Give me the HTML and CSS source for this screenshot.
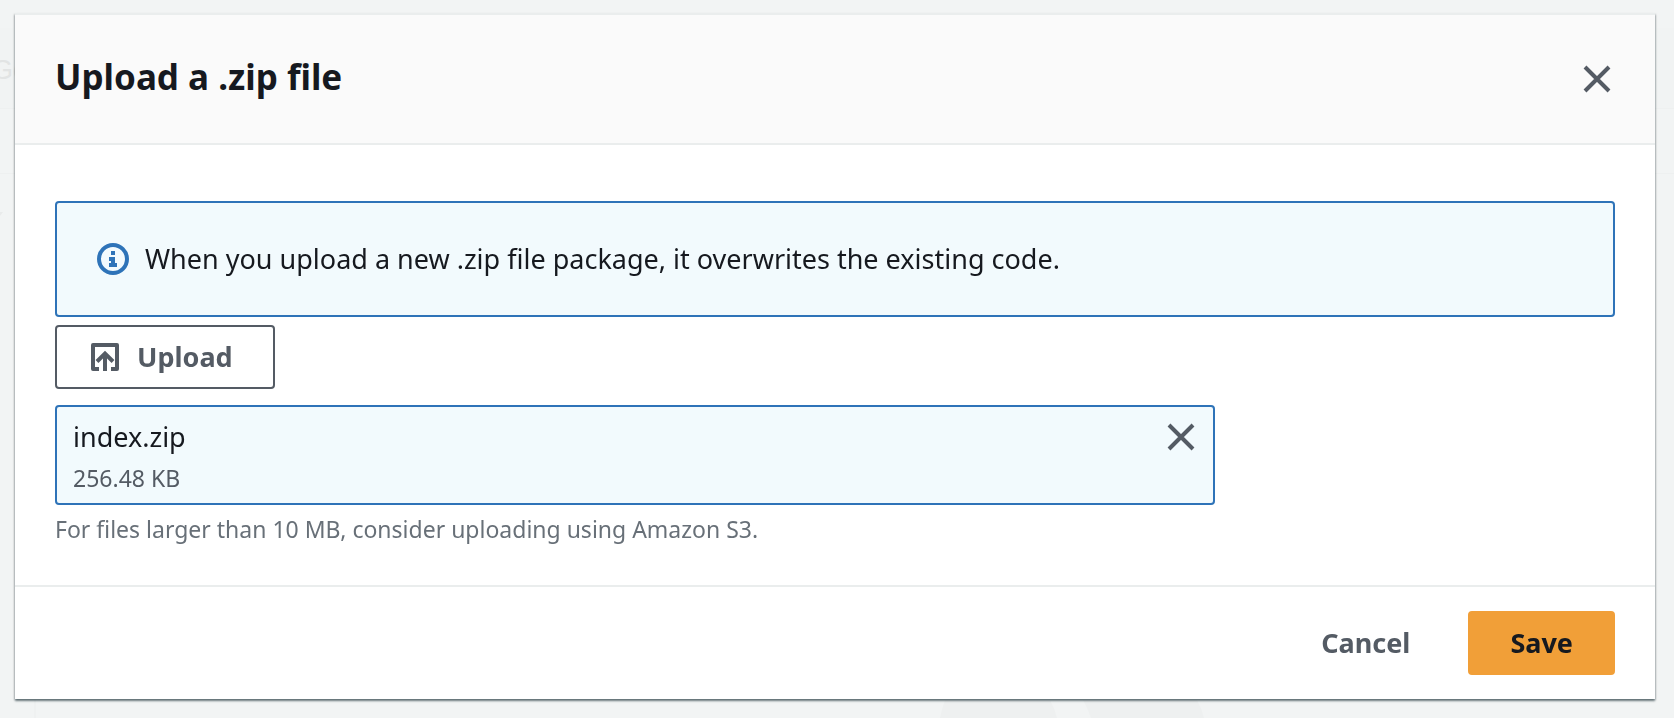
FILE: index.html
```html
<!DOCTYPE html>
<html lang="en">
<head>
<meta charset="utf-8">
<meta name="viewport" content="width=device-width, initial-scale=1">
<title>Upload a .zip file</title>
<link rel="stylesheet" href="styles.css">
</head>
<body>
<div class="backdrop" aria-hidden="true">
  <div class="bar bar-top"></div>
  <div class="bar bar-mid"></div>
  <span class="backdrop-word">Go</span>
  <svg class="backdrop-caret" width="12" height="8" viewBox="0 0 12 8"><path d="M0 0H12L6 8z" fill="#e9ebeb"/></svg>
  <div class="backdrop-rule"></div>
  <svg class="backdrop-art" width="280" height="18" viewBox="0 0 280 18"><path d="M10 0H115Q120 9 122 18H5Q7 8 10 0zM148 0H262Q267 9 269 18H156Q152 7 148 0z" fill="#eef0f0"/></svg>
</div>
<main class="overlay">
  <section class="modal" role="dialog" aria-modal="true" aria-labelledby="title">
    <header class="modal-header">
      <h1 class="title" id="title">Upload a .zip file</h1>
      <button class="icon-button" type="button" aria-label="Close">
        <svg width="32" height="32" viewBox="0 0 32 32"><path d="M4 4L28 28M28 4L4 28" stroke="currentColor" stroke-width="4"/></svg>
      </button>
    </header>
    <div class="modal-body">
      <div class="alert" role="status">
        <svg width="32" height="32" viewBox="0 0 32 32"><circle cx="16" cy="16" r="14" fill="none" stroke="currentColor" stroke-width="4"/><path d="M14 8h4v4h-4zM12 14h6v6h2v4h-8v-4h2v-2h-2z" fill="currentColor"/></svg>
        <p class="alert-text">When you upload a new .zip file package, it overwrites the existing code.</p>
      </div>
      <button class="button button-outline" type="button">
        <svg width="32" height="32" viewBox="0 0 32 32"><path d="M10 28H4V4H28V28H22" fill="none" stroke="currentColor" stroke-width="4" stroke-linejoin="round"/><path d="M16 30V13M8 20.500L16 12.500L24 20.500" fill="none" stroke="currentColor" stroke-width="4"/></svg>
        Upload
      </button>
      <div class="file">
        <div class="file-info">
          <span class="file-name">index.zip</span>
          <span class="file-size">256.48 KB</span>
        </div>
        <button class="icon-button" type="button" aria-label="Remove index.zip">
          <svg width="32" height="32" viewBox="0 0 32 32"><path d="M4 4L28 28M28 4L4 28" stroke="currentColor" stroke-width="4"/></svg>
        </button>
      </div>
      <p class="hint">For files larger than 10 MB, consider uploading using Amazon S3.</p>
    </div>
    <footer class="modal-footer">
      <button class="button button-link" type="button">Cancel</button>
      <button class="button button-primary" type="button">Save</button>
    </footer>
  </section>
</main>
</body>
</html>
```
FILE: styles.css
```css
* {
  box-sizing: border-box;
}

body {
  margin: 0;
  min-height: 100vh;
  background: #f2f4f4;
  color: #16191f;
  font-family: "Noto Sans", "Open Sans", sans-serif;
  font-size: 27px;
  line-height: 44px;
}

h1,
p {
  margin: 0;
}

svg {
  display: block;
  flex: none;
}

.backdrop {
  position: fixed;
  inset: 0;
  overflow: hidden;
}

.bar {
  position: absolute;
  left: 0;
  right: 0;
}

.bar-top {
  top: 28px;
  height: 81px;
  background: #f1f3f3;
  border-bottom: 1px solid #eef0f0;
}

.bar-mid {
  top: 164px;
  height: 10px;
  border-bottom: 1px solid #eef0f0;
}

.backdrop-word {
  position: absolute;
  left: -8px;
  top: 48px;
  color: #e2e4e4;
  font-family: "Liberation Sans", sans-serif;
}

.backdrop-caret {
  position: absolute;
  left: -9px;
  top: 212px;
}

.backdrop-rule {
  position: absolute;
  left: 34px;
  bottom: 0;
  width: 2px;
  height: 40px;
  background: #eff1f1;
}

.backdrop-art {
  position: absolute;
  left: 935px;
  bottom: 0;
}

.overlay {
  position: relative;
  padding: 13px 19px 19px 15px;
}

.modal {
  background: #fff;
  border-top: 2px solid #eaeded;
  box-shadow: 0 2px 2px rgba(0, 28, 36, 0.5), 1px 1px 2px rgba(0, 28, 36, 0.15), -1px 1px 2px rgba(0, 28, 36, 0.15);
}

.modal-header {
  display: flex;
  align-items: flex-end;
  justify-content: space-between;
  padding: 40px 40px 44px;
  background: #fafafa;
  border-bottom: 2px solid #eaeded;
}

.title {
  font-size: 35px;
  line-height: 44px;
  font-weight: 700;
}

.icon-button {
  padding: 4px 2px;
  border: 0;
  background: none;
  color: #545b64;
  cursor: pointer;
}

.modal-body {
  display: flex;
  flex-direction: column;
  align-items: flex-start;
  padding: 56px 40px 34px;
}

.alert {
  display: flex;
  align-items: center;
  align-self: stretch;
  gap: 16px;
  padding: 34px 40px;
  border: 2px solid #2e73b8;
  border-radius: 4px;
  background: #f2fafd;
  color: #2e73b8;
}

.alert-text {
  color: #16191f;
}

.button {
  display: flex;
  align-items: center;
  gap: 16px;
  padding: 8px 40px;
  border: 2px solid transparent;
  border-radius: 4px;
  background: none;
  color: #545b64;
  font: inherit;
  font-weight: 700;
  cursor: pointer;
}

.button-outline {
  margin-top: 8px;
  padding: 8px 40px 8px 32px;
  border-color: #545b64;
  background: #fff;
}

.button-primary {
  background: #f19f38;
  border-color: #f19f38;
  color: #16191f;
}

.file {
  display: flex;
  align-items: flex-start;
  justify-content: space-between;
  width: 100%;
  max-width: 1160px;
  margin-top: 16px;
  padding: 10px 14px 4px 16px;
  border: 2px solid #2e73b8;
  border-radius: 4px;
  background: #f2fafd;
}

.file-info {
  display: flex;
  flex-direction: column;
}

.file-name {
  line-height: 40px;
}

.file-size {
  color: #545b64;
  font-size: 23px;
  line-height: 42px;
}

.hint {
  margin-top: 2px;
  color: #687078;
  font-size: 23px;
}

.modal-footer {
  display: flex;
  justify-content: flex-end;
  gap: 16px;
  padding: 24px 40px;
  border-top: 2px solid #eaeded;
}
```
